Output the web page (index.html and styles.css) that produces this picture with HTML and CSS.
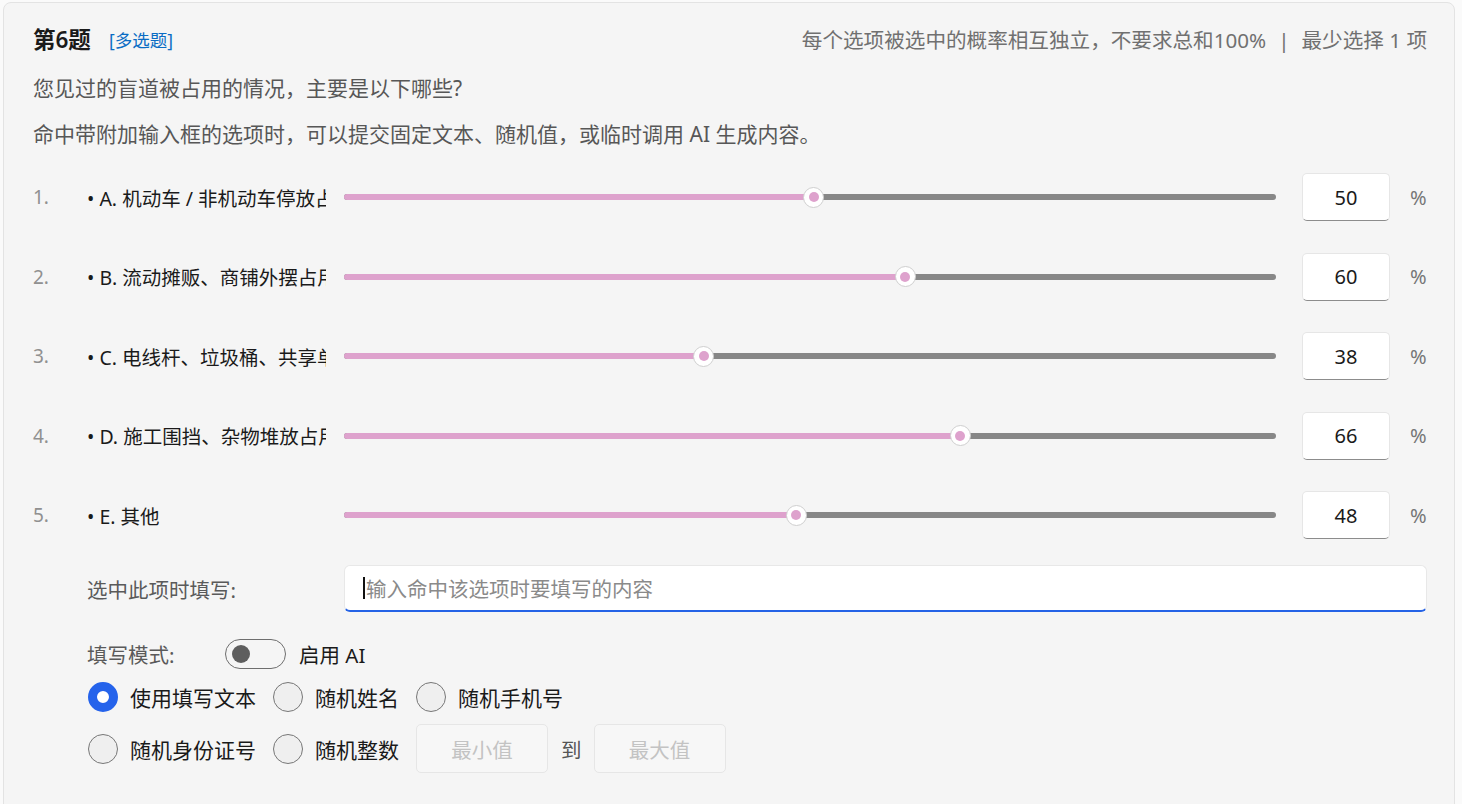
FILE: index.html
```html
<!DOCTYPE html>
<html lang="zh-CN">
<head>
<meta charset="utf-8">
<title>第6题</title>
<link rel="stylesheet" href="styles.css">
</head>
<body>
<div class="card">
  <div class="head">
    <div class="title">第6题<span class="tag">[多选题]</span></div>
    <div class="hint">每个选项被选中的概率相互独立，不要求总和100%<span class="sep">|</span>最少选择 1 项</div>
  </div>
  <p class="q">您见过的盲道被占用的情况，主要是以下哪些?</p>
  <p class="note">命中带附加输入框的选项时，可以提交固定文本、随机值，或临时调用 AI 生成内容。</p>

  <div class="opts">
    <div class="opt">
      <span class="num">1.</span>
      <span class="label">• A. 机动车 / 非机动车停放占用</span>
      <div class="slider"><div class="track"><div class="fill" style="width:50.4%"></div><span class="thumb" style="left:50.4%"></span></div></div>
      <div class="pct">50</div><span class="unit">%</span>
    </div>
    <div class="opt">
      <span class="num">2.</span>
      <span class="label">• B. 流动摊贩、商铺外摆占用</span>
      <div class="slider"><div class="track"><div class="fill" style="width:60.2%"></div><span class="thumb" style="left:60.2%"></span></div></div>
      <div class="pct">60</div><span class="unit">%</span>
    </div>
    <div class="opt">
      <span class="num">3.</span>
      <span class="label">• C. 电线杆、垃圾桶、共享单车等设施占用</span>
      <div class="slider"><div class="track"><div class="fill" style="width:38.6%"></div><span class="thumb" style="left:38.6%"></span></div></div>
      <div class="pct">38</div><span class="unit">%</span>
    </div>
    <div class="opt">
      <span class="num">4.</span>
      <span class="label">• D. 施工围挡、杂物堆放占用</span>
      <div class="slider"><div class="track"><div class="fill" style="width:66.1%"></div><span class="thumb" style="left:66.1%"></span></div></div>
      <div class="pct">66</div><span class="unit">%</span>
    </div>
    <div class="opt">
      <span class="num">5.</span>
      <span class="label">• E. 其他</span>
      <div class="slider"><div class="track"><div class="fill" style="width:48.5%"></div><span class="thumb" style="left:48.5%"></span></div></div>
      <div class="pct">48</div><span class="unit">%</span>
    </div>
  </div>

  <div class="extra">
    <span class="elabel">选中此项时填写:</span>
    <div class="textbox"><span class="caret"></span><span class="ph">输入命中该选项时要填写的内容</span></div>
  </div>

  <div class="mode">
    <span class="mlabel">填写模式:</span>
    <span class="toggle"><span class="knob"></span></span>
    <span class="ai">启用 AI</span>
  </div>

  <div class="radios">
    <label class="radio"><span class="dot on"></span>使用填写文本</label>
    <label class="radio"><span class="dot"></span>随机姓名</label>
    <label class="radio"><span class="dot"></span>随机手机号</label>
  </div>
  <div class="radios r2">
    <label class="radio"><span class="dot"></span>随机身份证号</label>
    <label class="radio"><span class="dot"></span>随机整数</label>
    <div class="range"><span class="rbox">最小值</span><span class="to">到</span><span class="rbox">最大值</span></div>
  </div>
</div>
</body>
</html>
```

FILE: styles.css
```css
* { box-sizing: border-box; }
html, body { margin: 0; padding: 0; }
body {
  background: #fafafa;
  font-family: "Noto Sans", "Noto Sans CJK SC", sans-serif;
  color: #1a1a1a;
  height: 804px;
  overflow: hidden;
}
.card {
  margin: 2px 7px 0 3px;
  height: 840px;
  background: #f5f5f5;
  border: 1px solid #e3e3e3;
  border-radius: 8px;
  padding: 23px 27px 0 29px;
}
.head {
  display: flex;
  justify-content: space-between;
  align-items: center;
  height: 28px;
}
.title {
  font-size: 22.5px;
  font-weight: 600;
  color: #1a1a1a;
  display: flex;
  align-items: center;
  line-height: 28px;
}
.tag {
  font-size: 17.5px;
  font-weight: 400;
  color: #0a6cc4;
  margin-left: 18px;
}
.hint {
  font-size: 20.6px;
  color: #707070;
  line-height: 28px;
}
.sep { margin: 0 12px; color: #707070; }
.q, .note {
  margin: 0;
  font-size: 21px;
  line-height: 28px;
  color: #575757;
}
.q { margin-top: 20px; }
.note { margin-top: 18px; }
.opts {
  margin-top: 25px;
  display: flex;
  flex-direction: column;
  gap: 31.5px;
}
.opt {
  display: flex;
  align-items: center;
  height: 48px;
}
.num {
  width: 54px;
  font-size: 19px;
  color: #909090;
}
.label {
  width: 239px;
  overflow: hidden;
  white-space: nowrap;
  font-size: 19.5px;
  color: #1a1a1a;
}
.slider {
  flex: 1;
  margin-left: 18px;
  display: flex;
  align-items: center;
  height: 48px;
}
.track {
  position: relative;
  width: 100%;
  height: 6px;
  border-radius: 3px;
  background: #878787;
}
.fill {
  height: 6px;
  border-radius: 3px;
  background: #dea2cd;
}
.thumb {
  position: absolute;
  top: 50%;
  width: 21px;
  height: 21px;
  margin: -10.5px 0 0 -10.5px;
  border-radius: 50%;
  background: #fff;
  border: 1px solid #cfcfcf;
  display: flex;
  align-items: center;
  justify-content: center;
}
.thumb::after {
  content: "";
  width: 10px;
  height: 10px;
  border-radius: 50%;
  background: #dea2cd;
}
.pct {
  width: 88px;
  height: 48px;
  margin-left: 26px;
  background: #fff;
  border: 1px solid #e6e6e6;
  border-bottom: 1px solid #8c8c8c;
  border-radius: 5px;
  display: flex;
  align-items: center;
  justify-content: center;
  font-size: 20px;
  color: #1a1a1a;
}
.unit {
  margin-left: 20px;
  width: 17px;
  font-size: 20px;
  color: #777;
}
.extra {
  margin-top: 26px;
  padding-left: 54px;
  display: flex;
  align-items: center;
}
.elabel {
  width: 257px;
  font-size: 20.5px;
  color: #5a5a5a;
}
.textbox {
  flex: 1;
  height: 47px;
  background: #fff;
  border: 1px solid #e8e8e8;
  border-bottom: 2px solid #2563e6;
  border-radius: 6px;
  display: flex;
  align-items: center;
  padding-left: 18px;
  font-size: 20.5px;
  color: #8a8a8a;
}
.caret {
  width: 2px;
  height: 22px;
  background: #111;
  margin-right: 1px;
}
.mode {
  margin-top: 27px;
  padding-left: 54px;
  display: flex;
  align-items: center;
  height: 30px;
}
.mlabel {
  width: 138px;
  font-size: 20.5px;
  color: #5a5a5a;
}
.toggle {
  width: 61px;
  height: 30px;
  border: 1px solid #6e6e6e;
  border-radius: 15px;
  display: flex;
  align-items: center;
  padding-left: 6px;
}
.knob {
  width: 18px;
  height: 18px;
  border-radius: 50%;
  background: #5e5e5e;
}
.ai {
  margin-left: 13px;
  font-size: 20.5px;
  color: #1a1a1a;
}
.radios {
  margin-top: 13px;
  padding-left: 55px;
  display: flex;
  align-items: center;
  height: 30px;
  gap: 17px;
}
.radios.r2 {
  margin-top: 12px;
  height: 49px;
}
.radio {
  display: flex;
  align-items: center;
  font-size: 21px;
  color: #1a1a1a;
}
.dot {
  width: 30px;
  height: 30px;
  border-radius: 50%;
  background: #efefef;
  border: 1.5px solid #777;
  margin-right: 12px;
}
.dot.on {
  background: #fff;
  border: 9px solid #2563eb;
}
.range {
  display: flex;
  align-items: center;
}
.rbox {
  width: 132px;
  height: 49px;
  border: 1px solid #e6e6e6;
  border-radius: 5px;
  background: #f7f7f7;
  display: flex;
  align-items: center;
  justify-content: center;
  font-size: 20.5px;
  color: #c3c3c3;
}
.to {
  margin: 0 12px 0 13px;
  font-size: 20.5px;
  color: #555;
}
```
